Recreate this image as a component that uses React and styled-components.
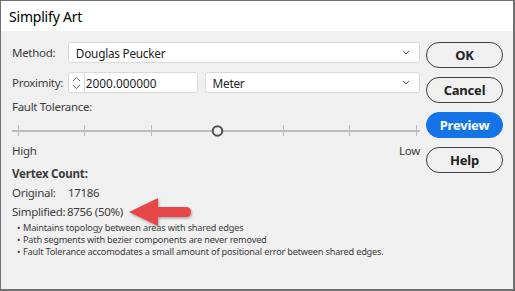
import React from "react";
import styled, { createGlobalStyle } from "styled-components";

const Global = createGlobalStyle`
  html, body { margin: 0; padding: 0; background: #ffffff; }
  body { font-family: "Noto Sans", "Open Sans", sans-serif; }
  * { box-sizing: border-box; }
`;

const Window = styled.div`
  position: relative;
  width: 515px;
  height: 291px;
  border-style: solid;
  border-color: #707070;
  border-width: 1px 2px 2px 1px;
  background: #f0f0f0;
  display: flex;
  flex-direction: column;
  overflow: hidden;
`;

const TitleBar = styled.div`
  height: 30px;
  background: #ffffff;
  display: flex;
  align-items: center;
  padding-left: 8px;
  font-size: 14px;
  color: #000;
  letter-spacing: -0.2px;
`;

const Body = styled.div`
  flex: 1;
  display: grid;
  grid-template-columns: 408px 77px;
  column-gap: 6px;
  padding: 11px 0 0 11px;
`;

const LeftCol = styled.div`
  display: flex;
  flex-direction: column;
`;

const RightCol = styled.div`
  display: flex;
  flex-direction: column;
  gap: 9px;
`;

const FieldRow = styled.div`
  display: flex;
  align-items: center;
  height: 21px;
  margin-bottom: ${(p) => p.$mb || 0}px;
`;

const Label = styled.div`
  width: 56px;
  font-size: 11.5px;
  color: #3c3c3c;
  letter-spacing: -0.3px;
  white-space: nowrap;
`;

const Select = styled.div`
  width: ${(p) => p.$w}px;
  height: 21px;
  margin-left: ${(p) => p.$ml || 0}px;
  background: #fff;
  border: 1px solid #dadada;
  border-radius: 3px;
  display: flex;
  align-items: center;
  justify-content: space-between;
  padding: 0 9px 0 7px;
  font-size: 11.8px;
  color: #222;
  letter-spacing: -0.25px;
`;

const NumberBox = styled.div`
  width: 130px;
  height: 21px;
  background: #fff;
  border: 1px solid #dadada;
  border-radius: 3px;
  display: flex;
  align-items: stretch;
`;

const Spinner = styled.div`
  width: 16px;
  border-right: 1px solid #dadada;
  display: flex;
  align-items: center;
  justify-content: center;
`;

const NumberText = styled.div`
  display: flex;
  align-items: center;
  padding-left: 1px;
  font-size: 11.8px;
  color: #222;
  letter-spacing: 0px;
`;

const PlainLabel = styled.div`
  font-size: 11.5px;
  color: #3c3c3c;
  letter-spacing: -0.3px;
  line-height: 14px;
  margin-top: ${(p) => p.$mt || 0}px;
`;

const SliderWrap = styled.div`
  margin-top: ${(p) => p.$mt || 0}px;
  height: 12px;
`;

const RangeLabels = styled.div`
  display: flex;
  justify-content: space-between;
  margin-top: 12px;
  font-size: 11.5px;
  color: #3c3c3c;
  line-height: 14px;
  letter-spacing: -0.3px;
`;

const Heading = styled.div`
  font-size: 11.5px;
  font-weight: 700;
  color: #3c3c3c;
  line-height: 14px;
  margin-top: 9px;
  letter-spacing: -0.2px;
`;

const StatRow = styled.div`
  display: flex;
  font-size: 11.5px;
  color: #3c3c3c;
  line-height: 14px;
  margin-top: 5px;
  letter-spacing: -0.3px;
`;

const StatKey = styled.div`
  width: ${(p) => p.$w}px;
`;

const Bullets = styled.ul`
  list-style: none;
  margin: 3px 0 0 0;
  padding: 0 0 0 5px;
  font-size: 9.2px;
  color: #3c3c3c;
  line-height: 12px;
  letter-spacing: -0.2px;
`;

const Bullet = styled.li`
  display: flex;
  gap: 2px;
  &::before {
    content: "•";
    width: 4px;
  }
`;

const Button = styled.div`
  height: 26px;
  border-radius: 13px;
  border: 1px solid ${(p) => (p.$primary ? "#1473e6" : "#3f3f3f")};
  background: ${(p) => (p.$primary ? "#1473e6" : "transparent")};
  color: ${(p) => (p.$primary ? "#fff" : "#222")};
  font-size: 13px;
  font-weight: 700;
  display: flex;
  align-items: center;
  justify-content: center;
  letter-spacing: -0.2px;
`;

const ArrowLayer = styled.svg`
  position: absolute;
  left: 126px;
  top: 194px;
`;

const Chevron = () => (
  <svg width="8" height="5" viewBox="0 0 8 5">
    <path d="M1 1 L4 4 L7 1" fill="none" stroke="#555" strokeWidth="1" />
  </svg>
);

const SpinIcon = () => (
  <svg width="9" height="16" viewBox="0 0 9 16">
    <path d="M1 6 L4.5 2.5 L8 6" fill="none" stroke="#666" strokeWidth="1" />
    <path d="M1 10 L4.5 13.5 L8 10" fill="none" stroke="#666" strokeWidth="1" />
  </svg>
);

const ticks = [6, 72, 139, 271, 337, 404];

const Slider = () => (
  <svg width="408" height="12" viewBox="0 0 408 12">
    <rect x="0" y="5" width="408" height="2" fill="#bdbdbd" />
    {ticks.map((t) => (
      <rect key={t} x={t} y="0" width="1" height="11" fill="#bdbdbd" />
    ))}
    <circle cx="205.5" cy="6" r="4.8" fill="#f0f0f0" stroke="#505050" strokeWidth="2" />
  </svg>
);

export default function App() {
  return (
    <>
      <Global />
      <Window>
        <TitleBar>Simplify Art</TitleBar>
        <Body>
          <LeftCol>
            <FieldRow $mb={9}>
              <Label>Method:</Label>
              <Select $w={353}>
                <span>Douglas Peucker</span>
                <Chevron />
              </Select>
            </FieldRow>
            <FieldRow>
              <Label>Proximity:</Label>
              <NumberBox>
                <Spinner>
                  <SpinIcon />
                </Spinner>
                <NumberText>2000.000000</NumberText>
              </NumberBox>
              <Select $w={216} $ml={7}>
                <span>Meter</span>
                <Chevron />
              </Select>
            </FieldRow>
            <PlainLabel $mt={7}>Fault Tolerance:</PlainLabel>
            <SliderWrap $mt={6}>
              <Slider />
            </SliderWrap>
            <RangeLabels>
              <span>High</span>
              <span>Low</span>
            </RangeLabels>
            <Heading>Vertex Count:</Heading>
            <StatRow>
              <StatKey $w={56}>Original:</StatKey>
              <span>17186</span>
            </StatRow>
            <StatRow>
              <StatKey $w={55}>Simplified:</StatKey>
              <span>8756 (50%)</span>
            </StatRow>
            <Bullets>
              <Bullet>Maintains topology between areas with shared edges</Bullet>
              <Bullet>Path segments with bezier components are never removed</Bullet>
              <Bullet>Fault Tolerance accomodates a small amount of positional error between shared edges.</Bullet>
            </Bullets>
          </LeftCol>
          <RightCol>
            <Button>OK</Button>
            <Button>Cancel</Button>
            <Button $primary>Preview</Button>
            <Button>Help</Button>
          </RightCol>
        </Body>
        <ArrowLayer width="68" height="36" viewBox="0 0 68 36">
          <defs>
            <filter id="sh" x="-10%" y="-20%" width="130%" height="150%">
              <feDropShadow dx="1" dy="1.5" stdDeviation="1" floodColor="#000" floodOpacity="0.3" />
            </filter>
          </defs>
          <path
            d="M2 17 L31 3 L31 12 L59 12 Q64 12 64 17 Q64 22 59 22 L31 22 L31 31 Z"
            fill="#e8464a"
            filter="url(#sh)"
          />
        </ArrowLayer>
      </Window>
    </>
  );
}
